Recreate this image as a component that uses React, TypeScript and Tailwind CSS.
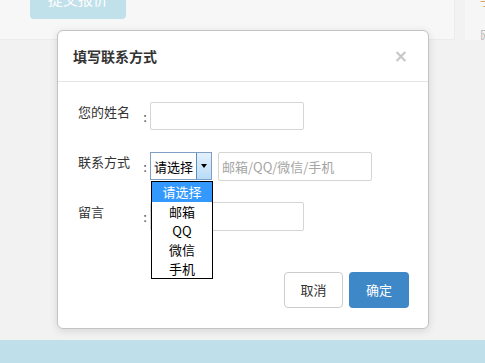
import React from "react";

const font = { fontFamily: '"Noto Sans CJK SC", "Noto Sans", sans-serif' };

function Label({ text }: { text: string }) {
  return (
    <div className="flex shrink-0">
      <div className="w-[62px] pt-[1px] text-[13px] leading-[18px] text-[#333]">{text}</div>
      <div className="w-[10px] pt-[6px] text-center text-[13px] leading-[18px] text-[#555]">:</div>
    </div>
  );
}

export default function App() {
  const items = ["邮箱", "QQ", "微信", "手机"];
  return (
    <div className="relative flex h-[363px] w-[485px] flex-col overflow-hidden bg-[#f2f2f2]" style={font}>
      <div className="flex h-[40px] shrink-0">
        <div className="h-[40px] w-[455px] shrink-0 border-b border-r border-[#ececec] bg-[#f7f7f7]">
          <div className="ml-[30px] mt-[-20px] flex h-[39px] w-[96px] items-center justify-center rounded-[4px] bg-[#c0e0ea] text-[15px] text-white">
            提交报价
          </div>
        </div>
        <div className="ml-[10px] min-w-0 flex-1 overflow-hidden bg-[#f6f6f6] pl-[15px] text-[13px] leading-[18px] text-[#bbb]">
          <div className="mt-[-9px] text-[#d9a36a]">手</div>
          <div className="mt-[17px]">网</div>
        </div>
      </div>
      <div className="flex-1" />
      <div className="h-[23px] shrink-0 bg-[#bfe0ea]" />

      <div className="absolute left-[57px] top-[30px] flex h-[299px] w-[372px] flex-col rounded-[6px] border border-[#c3c3c3] bg-white shadow-[0_2px_8px_rgba(0,0,0,0.12)]">
        <div className="flex h-[51px] shrink-0 items-center justify-between border-b border-[#e5e5e5] pl-[15px] pr-[20px]">
          <div className="text-[14px] font-bold text-[#333]">填写联系方式</div>
          <div className="text-[17px] font-bold leading-none text-[#c8c8c8]" style={{ fontFamily: '"DejaVu Sans", sans-serif' }}>
            ×
          </div>
        </div>
        <div className="flex flex-1 flex-col pl-[20px] pr-[19px] pt-[20px]">
          <div className="flex items-start">
            <Label text="您的姓名" />
            <div className="h-[28px] w-[154px] rounded-[2px] border border-[#d5d5d5]" />
          </div>
          <div className="mt-[22px] flex items-start">
            <Label text="联系方式" />
            <div className="relative">
              <div className="flex h-[28px] w-[62px] border border-[#7f9fc4] bg-white">
                <div className="flex flex-1 items-center pl-[3px] text-[13px] leading-none text-black">请选择</div>
                <div className="flex w-[15px] items-center justify-center border-l border-[#5a8fbf] bg-gradient-to-b from-[#e4f1fc] to-[#b8dcf6]">
                  <div className="h-0 w-0 border-x-[3.5px] border-t-[4px] border-x-transparent border-t-black" />
                </div>
              </div>
              <div className="absolute left-[1px] top-[29px] z-10 flex w-[62px] flex-col border border-black bg-white text-center text-[13px] text-black">
                <div className="flex h-[20px] items-center justify-center bg-[#3399ff] text-white">请选择</div>
                {items.map((t) => (
                  <div key={t} className="flex h-[19px] items-center justify-center">
                    {t}
                  </div>
                ))}
              </div>
            </div>
            <div className="ml-[6px] flex h-[29px] w-[154px] items-center rounded-[2px] border border-[#d5d5d5] pl-[3px] text-[13px] text-[#a5a5a5]">
              邮箱/QQ/微信/手机
            </div>
          </div>
          <div className="mt-[21px] flex items-start">
            <Label text="留言" />
            <div className="h-[29px] w-[154px] rounded-[2px] border border-[#d5d5d5]" />
          </div>
          <div className="mt-[41px] flex justify-end gap-[6px]">
            <div className="flex h-[36px] w-[59px] items-center justify-center rounded-[4px] border border-[#cccccc] bg-white text-[13px] text-[#333]">
              取消
            </div>
            <div className="flex h-[36px] w-[60px] items-center justify-center rounded-[4px] bg-[#3f88c8] text-[13px] text-white">
              确定
            </div>
          </div>
        </div>
      </div>
    </div>
  );
}
